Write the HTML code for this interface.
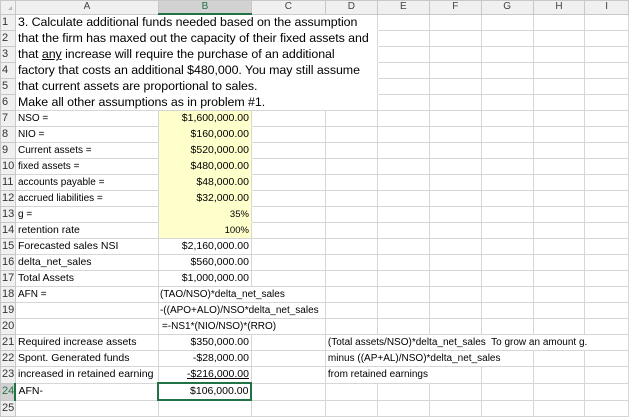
<!DOCTYPE html>
<html><head><meta charset="utf-8">
<style>
html,body{margin:0;padding:0;background:#fff;width:629px;height:412px;overflow:hidden}
table{border-collapse:collapse;table-layout:fixed;font-family:"Liberation Sans",sans-serif;color:#000;position:absolute;left:0;top:0}
td{border:1px solid #d6d6d6;height:15px;padding:0 2px;white-space:nowrap;overflow:hidden;font-size:10px;line-height:15px;box-sizing:border-box}
tr.h td{height:13px;background:#f0f0f0;color:#444;text-align:center;font-size:10px;line-height:12px;border-color:#c8c8c8;padding:0}
td.rh{background:#f0f0f0;color:#333;font-size:11px;padding:0 0 0 1px;border-color:#c8c8c8;text-align:left}
td.big{font-size:12.4px;letter-spacing:-0.05px;border-top-color:#fff;border-bottom-color:#fff}
tr.b6 td.big{border-bottom-color:#d6d6d6}
tr.b1 td.big{border-top-color:#d6d6d6}
td.y{background:#ffffcc;border-top-color:#ffffcc;border-bottom-color:#ffffcc}
td.r{text-align:right;font-size:10.5px}
td.m{font-size:10.5px}
td.f{font-size:10px}
.sel{background:#d2d2d2 !important;color:#217346 !important;border-bottom:2px solid #217346 !important}
.selr{background:#d2d2d2 !important;color:#217346 !important;border-right:2px solid #217346 !important}
</style></head><body>
<table>
<colgroup><col style="width:15px"><col style="width:143px"><col style="width:93px"><col style="width:74px"><col style="width:52px"><col style="width:52px"><col style="width:52px"><col style="width:52px"><col style="width:52px"><col style="width:44px"></colgroup>
<tr class="h"><td></td><td>A</td><td class="sel">B</td><td>C</td><td>D</td><td>E</td><td>F</td><td>G</td><td>H</td><td>I</td></tr>
<tr class="b1"><td class="rh">1</td><td colspan="4" class="big">3. Calculate additional funds needed based on the assumption</td><td></td><td></td><td></td><td></td><td></td></tr>
<tr><td class="rh">2</td><td colspan="4" class="big">that the firm has maxed out the capacity of their fixed assets and</td><td></td><td></td><td></td><td></td><td></td></tr>
<tr><td class="rh">3</td><td colspan="4" class="big">that <u>any</u> increase will require the purchase of an additional</td><td></td><td></td><td></td><td></td><td></td></tr>
<tr><td class="rh">4</td><td colspan="4" class="big">factory that costs an additional $480,000. You may still assume</td><td></td><td></td><td></td><td></td><td></td></tr>
<tr><td class="rh">5</td><td colspan="4" class="big">that current assets are proportional to sales.</td><td></td><td></td><td></td><td></td><td></td></tr>
<tr class="b6"><td class="rh">6</td><td colspan="4" class="big">Make all other assumptions as in problem #1.</td><td></td><td></td><td></td><td></td><td></td></tr>
<tr><td class="rh">7</td><td>NSO =</td><td class="y r" style="border-top-color:#d6d6d6">$1,600,000.00</td><td></td><td></td><td></td><td></td><td></td><td></td><td></td></tr>
<tr><td class="rh">8</td><td>NIO =</td><td class="y r">$160,000.00</td><td></td><td></td><td></td><td></td><td></td><td></td><td></td></tr>
<tr><td class="rh">9</td><td>Current assets =</td><td class="y r">$520,000.00</td><td></td><td></td><td></td><td></td><td></td><td></td><td></td></tr>
<tr><td class="rh">10</td><td>fixed assets =</td><td class="y r">$480,000.00</td><td></td><td></td><td></td><td></td><td></td><td></td><td></td></tr>
<tr><td class="rh">11</td><td>accounts payable =</td><td class="y r">$48,000.00</td><td></td><td></td><td></td><td></td><td></td><td></td><td></td></tr>
<tr><td class="rh">12</td><td>accrued liabilities =</td><td class="y r">$32,000.00</td><td></td><td></td><td></td><td></td><td></td><td></td><td></td></tr>
<tr><td class="rh">13</td><td>g =</td><td class="y r" style="font-size:9.5px">35%</td><td></td><td></td><td></td><td></td><td></td><td></td><td></td></tr>
<tr><td class="rh">14</td><td class="m">retention rate</td><td class="y r" style="font-size:9.5px;border-bottom-color:#d6d6d6">100%</td><td></td><td></td><td></td><td></td><td></td><td></td><td></td></tr>
<tr><td class="rh">15</td><td class="m">Forecasted sales NSI</td><td class="r">$2,160,000.00</td><td></td><td></td><td></td><td></td><td></td><td></td><td></td></tr>
<tr><td class="rh">16</td><td class="m">delta_net_sales</td><td class="r">$560,000.00</td><td></td><td></td><td></td><td></td><td></td><td></td><td></td></tr>
<tr><td class="rh">17</td><td class="m">Total Assets</td><td class="r">$1,000,000.00</td><td></td><td></td><td></td><td></td><td></td><td></td><td></td></tr>
<tr><td class="rh">18</td><td>AFN =</td><td colspan="2" class="f" style="padding-left:1px">(TAO/NSO)*delta_net_sales</td><td></td><td></td><td></td><td></td><td></td><td></td></tr>
<tr><td class="rh">19</td><td></td><td colspan="2" class="f" style="padding-left:1px">-((APO+ALO)/NSO*delta_net_sales</td><td></td><td></td><td></td><td></td><td></td><td></td></tr>
<tr><td class="rh">20</td><td></td><td colspan="2" class="f" style="padding-left:3px">=-NS1*(NIO/NSO)*(RRO)</td><td></td><td></td><td></td><td></td><td></td><td></td></tr>
<tr><td class="rh">21</td><td class="m">Required increase assets</td><td class="r">$350,000.00</td><td></td><td colspan="6" class="f">(Total assets/NSO)*delta_net_sales&nbsp; To grow an amount g.</td></tr>
<tr><td class="rh">22</td><td class="m">Spont. Generated funds</td><td class="r">-$28,000.00</td><td></td><td colspan="4" class="f">minus ((AP+AL)/NSO)*delta_net_sales</td><td></td><td></td></tr>
<tr><td class="rh">23</td><td class="m" style="padding-right:0">increased in retained earning</td><td class="r"><u>-$216,000.00</u></td><td></td><td colspan="3" class="f">from retained earnings</td><td></td><td></td><td></td></tr>
<tr><td class="rh selr">24</td><td class="m">AFN-</td><td class="r" style="border:2px solid #217346">$106,000.00</td><td></td><td></td><td></td><td></td><td></td><td></td><td></td></tr>
<tr><td class="rh">25</td><td></td><td></td><td></td><td></td><td></td><td></td><td></td><td></td><td></td></tr>
</table>
<div style="position:absolute;left:0;top:0;width:0;height:0;border-left:4px solid transparent;border-bottom:4px solid #b8b8b8;margin:6px 0 0 8px"></div>
</body></html>
